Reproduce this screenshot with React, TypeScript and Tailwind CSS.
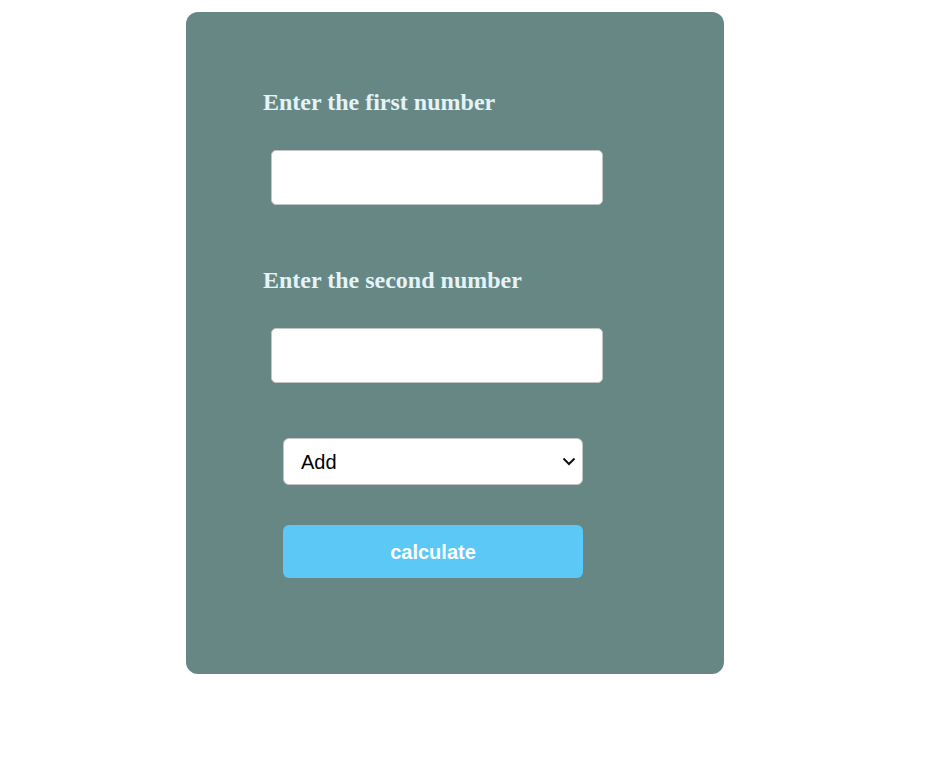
export default function App() {
  return (
    <div className="min-h-[759px] bg-white pt-[12px]">
      <div className="ml-[186px] flex h-[662px] w-[538px] flex-col rounded-[12px] bg-[#668784] pl-[77px]">
        {/* first number */}
        <h2 className="mt-[76px] h-[28px] font-['Liberation_Serif',serif] text-[24px] font-bold leading-[28px] text-[#e4f3f8]">
          Enter the first number
        </h2>
        <input
          type="text"
          className="ml-[8px] mt-[34px] h-[55px] w-[332px] rounded-[5px] border border-[#c4c4c4] bg-white px-3 text-[20px] outline-none"
        />

        {/* second number */}
        <h2 className="mt-[61px] h-[28px] font-['Liberation_Serif',serif] text-[24px] font-bold leading-[28px] text-[#e4f3f8]">
          Enter the second number
        </h2>
        <input
          type="text"
          className="ml-[8px] mt-[34px] h-[55px] w-[332px] rounded-[5px] border border-[#c4c4c4] bg-white px-3 text-[20px] outline-none"
        />

        {/* operation */}
        <div className="relative ml-[20px] mt-[55px] w-[300px]">
          <select className="h-[47px] w-full appearance-none rounded-[6px] border border-[#c4c4c4] bg-white pl-[17px] font-['Liberation_Sans',sans-serif] text-[20px] text-black outline-none">
            <option>Add</option>
            <option>Subtract</option>
            <option>Multiply</option>
            <option>Divide</option>
          </select>
          <svg
            className="pointer-events-none absolute right-[7px] top-[19px]"
            width="14"
            height="9"
            viewBox="0 0 14 9"
            fill="none"
          >
            <path d="M1.5 1.5 L7 7 L12.5 1.5" stroke="#111" strokeWidth="2" />
          </svg>
        </div>

        <button className="ml-[20px] mt-[40px] h-[53px] w-[300px] rounded-[6px] bg-[#5bc8f6] font-['Liberation_Sans',sans-serif] text-[20px] font-bold text-white">
          calculate
        </button>
      </div>
    </div>
  );
}
